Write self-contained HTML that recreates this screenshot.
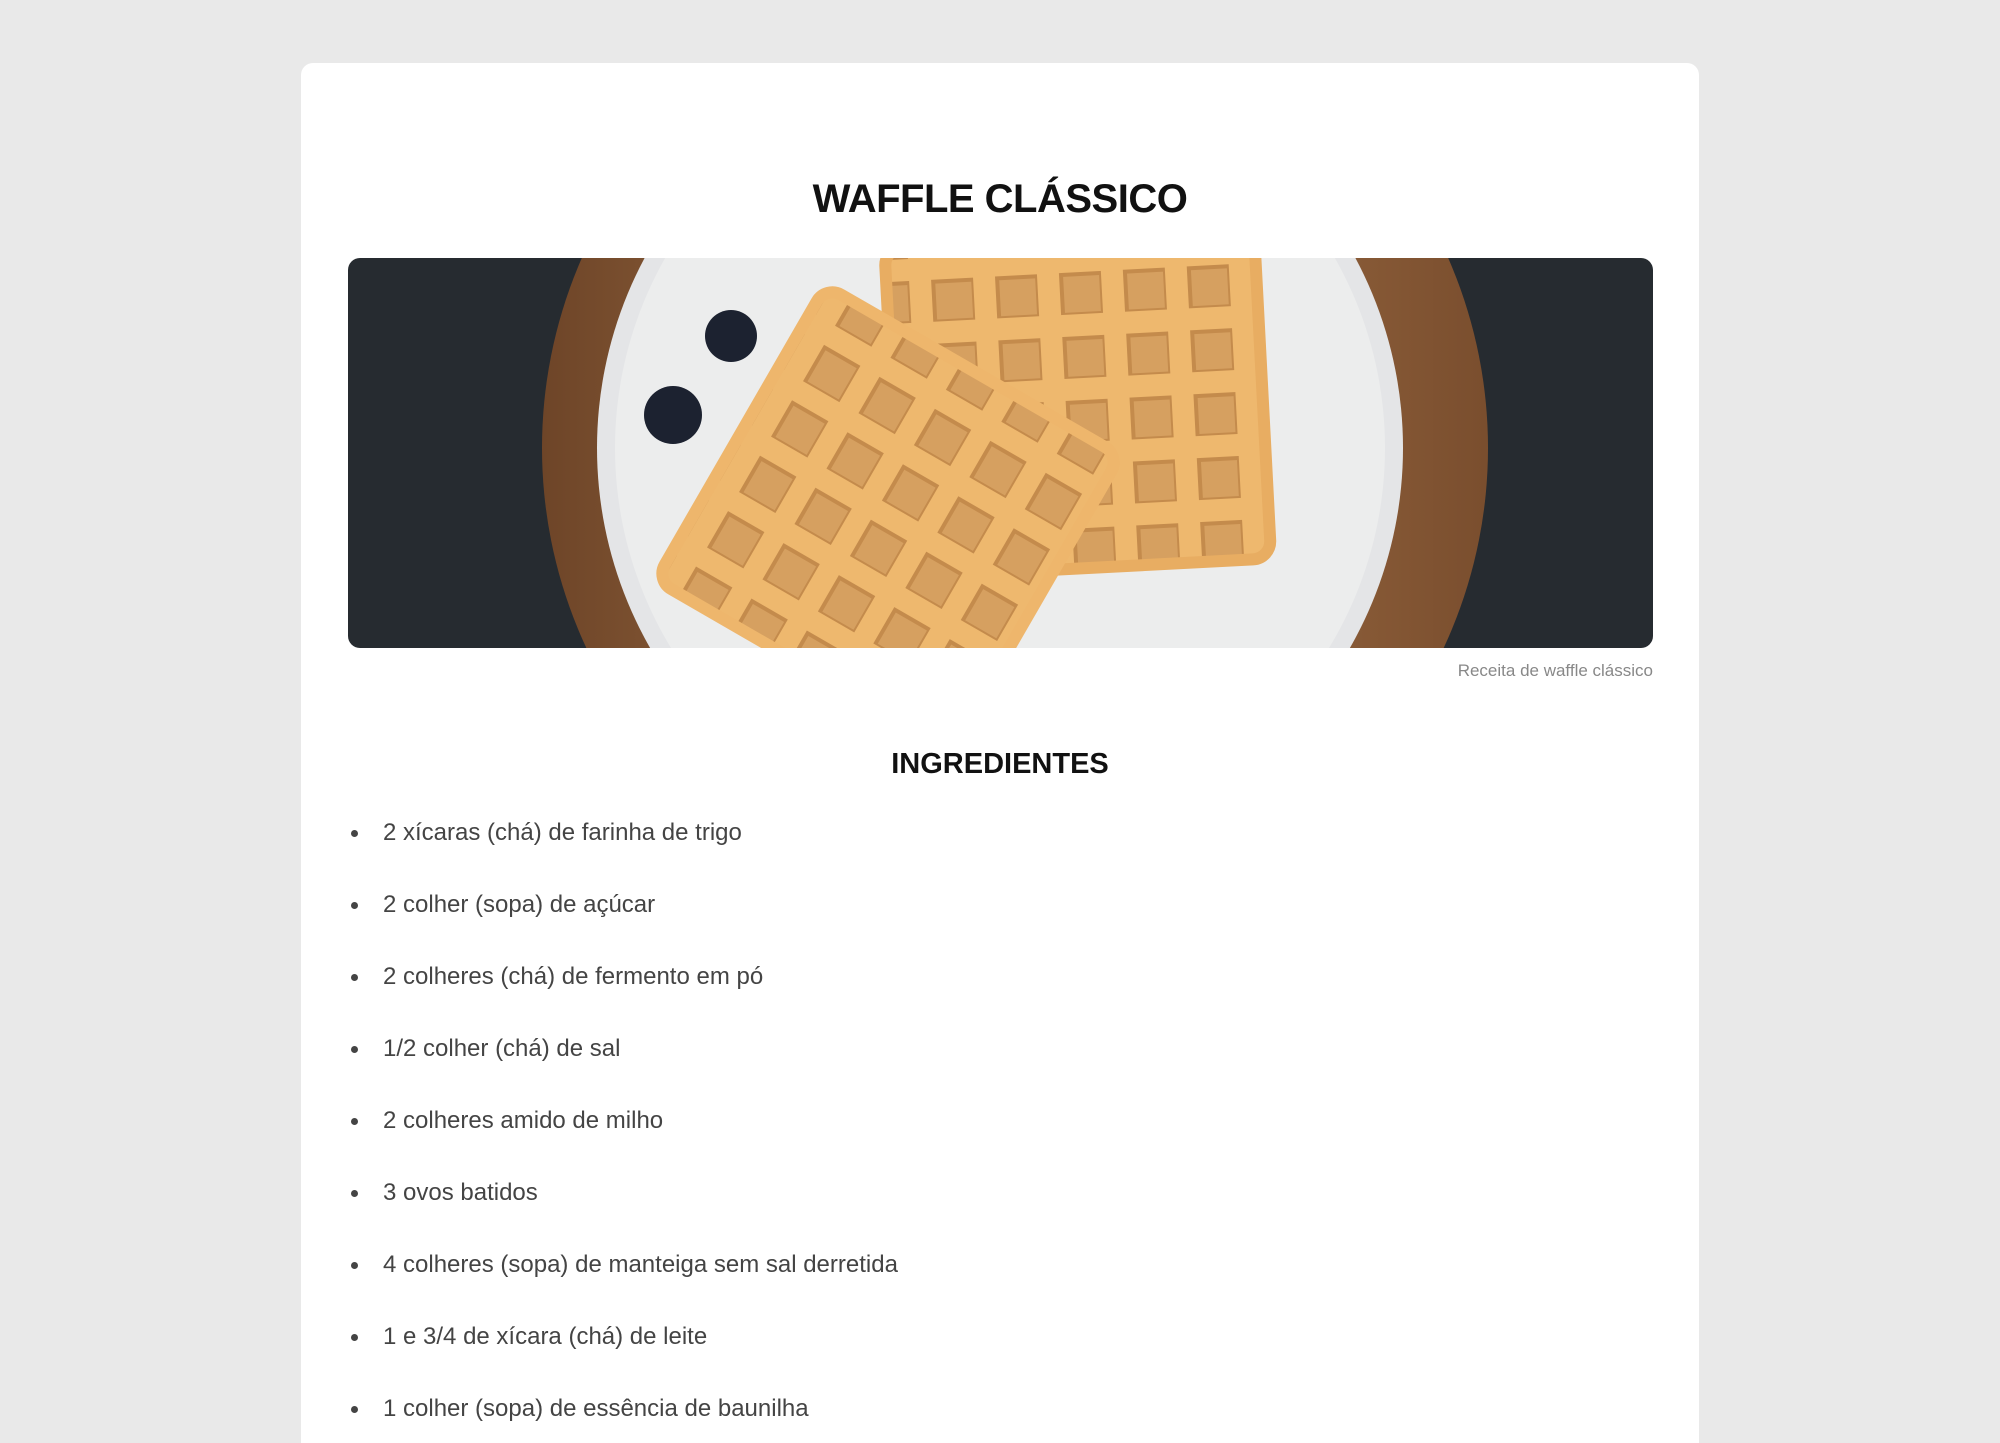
<!DOCTYPE html>
<html><head><meta charset="utf-8"><style>
html,body{margin:0;padding:0;width:2000px;height:1443px;overflow:hidden;background:#e9e9e9;font-family:"Liberation Sans",Arial,sans-serif}
.card{position:absolute;left:301px;top:63px;width:1398px;height:1380px;background:#fff;border-radius:12px 12px 0 0}
h1{position:absolute;left:0;right:0;top:171px;margin:0;text-align:center;font-size:40px;font-weight:bold;color:#111;line-height:56px;letter-spacing:-0.5px}
.img{position:absolute;left:348px;top:258px;width:1305px;height:390px;border-radius:12px;overflow:hidden}
.cap{position:absolute;right:347px;top:660px;font-size:17px;color:#888;line-height:22px}
h2{position:absolute;left:0;right:0;top:745px;margin:0;text-align:center;font-size:29px;font-weight:bold;color:#111;line-height:38px}
.li{position:absolute;left:383px;font-size:24px;color:#444;line-height:30px}
.li:before{content:"";position:absolute;left:-32px;top:12px;width:7px;height:7px;border-radius:50%;background:#444}
</style></head><body>
<div class="card"></div>
<h1>WAFFLE CLÁSSICO</h1>
<div class="img">
<svg width="1305" height="390" viewBox="0 0 1305 390">
<defs>
<pattern id="g" width="64" height="64" patternUnits="userSpaceOnUse">
<rect width="64" height="64" fill="#eeb86e"/>
<rect x="14" y="14" width="42" height="42" fill="#c48b4c"/>
<rect x="18" y="18" width="36" height="36" fill="#d6a060"/>
</pattern>
<linearGradient id="w" x1="0" x2="1"><stop offset="0" stop-color="#6e4528"/><stop offset=".5" stop-color="#a8764a"/><stop offset="1" stop-color="#7a4e2e"/></linearGradient>
</defs>
<rect width="1305" height="390" fill="#262b30"/>
<circle cx="667" cy="190" r="473" fill="url(#w)"/>
<circle cx="652" cy="190" r="403" fill="#e4e5e7"/>
<circle cx="652" cy="190" r="385" fill="#eceded"/>
<g transform="rotate(-3 736 150)">
<rect x="545" y="-20" width="370" height="330" rx="18" fill="url(#g)" stroke="#e8ad62" stroke-width="12"/>
</g>
<g transform="rotate(30 540 260)">
<rect x="370" y="90" width="340" height="340" rx="18" fill="url(#g)" stroke="#eeb66c" stroke-width="12"/>
</g>
<circle cx="383" cy="78" r="26" fill="#1c2230"/>
<circle cx="325" cy="157" r="29" fill="#1c2230"/>
</svg>
</div>
<div class="cap">Receita de waffle clássico</div>
<h2>INGREDIENTES</h2>
<div class="li" style="top:818px">2 xícaras (chá) de farinha de trigo</div>
<div class="li" style="top:890px">2 colher (sopa) de açúcar</div>
<div class="li" style="top:962px">2 colheres (chá) de fermento em pó</div>
<div class="li" style="top:1034px">1/2 colher (chá) de sal</div>
<div class="li" style="top:1106px">2 colheres amido de milho</div>
<div class="li" style="top:1178px">3 ovos batidos</div>
<div class="li" style="top:1250px">4 colheres (sopa) de manteiga sem sal derretida</div>
<div class="li" style="top:1322px">1 e 3/4 de xícara (chá) de leite</div>
<div class="li" style="top:1394px">1 colher (sopa) de essência de baunilha</div>
</body></html>
